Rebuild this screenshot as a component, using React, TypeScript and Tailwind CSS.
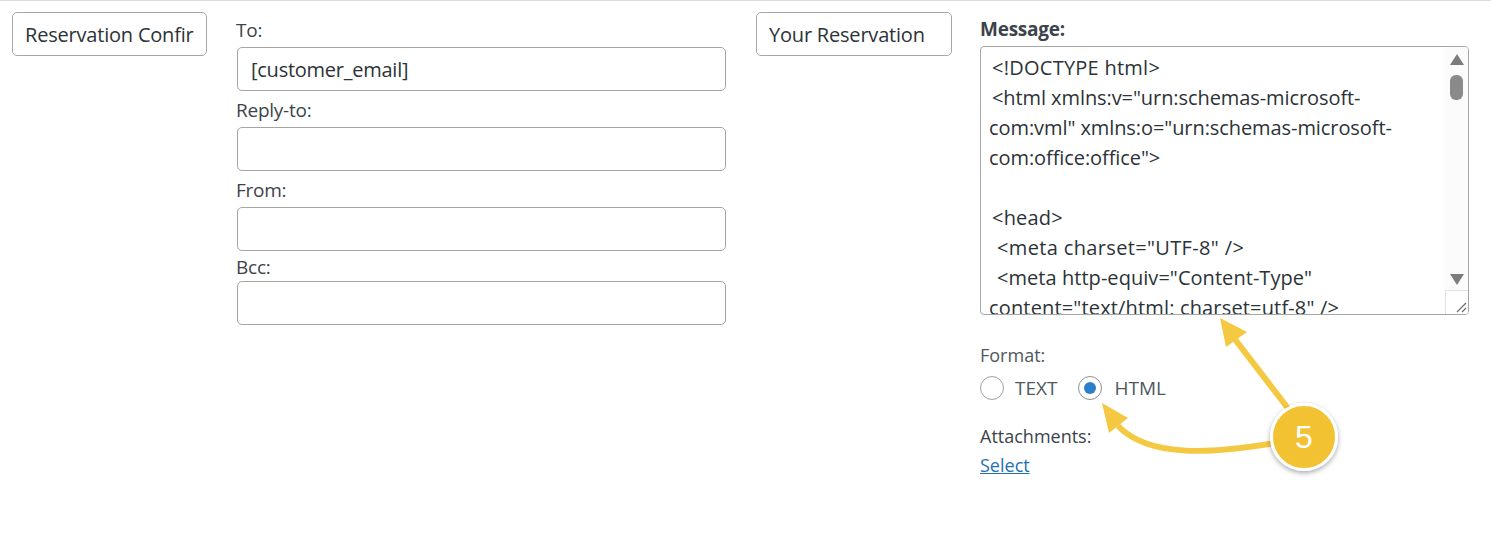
const font = "font-['Open_Sans','Noto_Sans',sans-serif]";

function Field({ label, value, className, labelClass }: { label: string; value?: string; className?: string; labelClass?: string }) {
  return (
    <div className={className}>
      <div className={`${labelClass ?? "mb-[4px]"} text-[19px] leading-[26px] text-[#3c434a] tracking-[-0.25px] ml-[-1px]`}>{label}</div>
      <div className="h-[44px] w-[489px] rounded-[5px] border border-[#a6a6a6] bg-white px-[13px] text-[20px] leading-[43px] text-[#2c3338] tracking-[-0.25px]">
        {value}
      </div>
    </div>
  );
}

function NameBox({ text, width }: { text: string; width: string }) {
  return (
    <div className={`${width} h-[44px] shrink-0 overflow-hidden whitespace-nowrap rounded-[5px] border border-[#a6a6a6] px-[12px] text-[20px] leading-[44px] text-[#2c3338] tracking-[-0.2px]`}>
      {text}
    </div>
  );
}

function Annotation() {
  return (
    <svg className="absolute left-0 top-0 pointer-events-none" width="1491" height="552" viewBox="0 0 1491 552">
      <defs>
        <filter id="badgeShadow" x="-30%" y="-30%" width="160%" height="160%">
          <feDropShadow dx="0" dy="2" stdDeviation="2.5" floodColor="#000" floodOpacity="0.35" />
        </filter>
      </defs>
      <path d="M1290 410 L1234 337" stroke="#f5c842" strokeWidth="6" fill="none" />
      <polygon points="1220,317 1247,331 1226,346" fill="#f5c842" />
      <path d="M1275 442 C1215 452 1150 458 1118 425" stroke="#f5c842" strokeWidth="6" fill="none" />
      <polygon points="1102,402 1128,417 1109,432" fill="#f5c842" />
      <circle cx="1304" cy="436" r="32.5" fill="#f2c232" stroke="#fff" strokeWidth="3" filter="url(#badgeShadow)" />
      <text x="1304" y="447" textAnchor="middle" fontSize="32" fill="#fff" fontFamily="Liberation Sans, Arial, sans-serif">5</text>
    </svg>
  );
}

const lines = [
  { t: '<!DOCTYPE html>', cls: 'pl-[3px] tracking-[0.25px]' },
  { t: '<html xmlns:v="urn:schemas-microsoft-', cls: 'pl-[3px] tracking-[-0.08px]' },
  { t: 'com:vml" xmlns:o="urn:schemas-microsoft-', cls: 'tracking-[-0.08px]' },
  { t: 'com:office:office">', cls: 'tracking-[-0.08px]' },
  { t: '\u00a0', cls: '' },
  { t: '<head>', cls: 'pl-[3px] tracking-[0.2px]' },
  { t: '<meta charset="UTF-8" />', cls: 'pl-[8px] tracking-[0.35px]' },
  { t: '<meta http-equiv="Content-Type"', cls: 'pl-[8px] tracking-[0.05px]' },
  { t: 'content="text/html; charset=utf-8" />', cls: 'tracking-[0.16px]' },
];

export default function App() {
  return (
    <div className={`relative h-[552px] w-[1491px] overflow-hidden border-t border-[#dcdcde] bg-white ${font}`}>
      <div className="flex items-start pl-[12px] pt-[11px]">
        <NameBox text="Reservation Confir" width="w-[195px]" />
        <div className="ml-[30px] w-[519px] shrink-0 mt-[5px]">
          <Field label="To:" value="[customer_email]" />
          <Field label="Reply-to:" className="mt-[6px]" />
          <Field label="From:" className="mt-[6px]" />
          <Field label="Bcc:" className="mt-[3px]" labelClass="mb-[1px]" />
        </div>
        <NameBox text="Your Reservation" width="w-[196px]" />
        <div className="ml-[29px] w-[489px] shrink-0 mt-[4px]">
          <div className="ml-[-1px] text-[19px] leading-[26px] font-bold text-[#3c434a] tracking-[-0.25px]">Message:</div>
          <div className="relative ml-[-1px] mt-[4px] h-[269px] w-[489px] overflow-hidden rounded-[4px] border border-[#a6a6a6] bg-white pl-[8px] pt-[6px]">
            {lines.map((l, i) => (
              <div key={i} className={`${l.cls} whitespace-pre text-[20px] leading-[30px] text-[#2c3338]`}>
                {l.t}
              </div>
            ))}
            <div className="absolute right-0 top-0 flex h-full w-[23px] flex-col items-center bg-[#fbfbfb]">
              <svg className="mt-[7px]" width="14" height="11" viewBox="0 0 14 11"><path d="M7 0 L14 11 H0 Z" fill="#7c7c7c" /></svg>
              <div className="mt-[10px] h-[25px] w-[13px] rounded-[6px] bg-[#8a8a8a]" />
              <svg className="mt-[174px]" width="14" height="11" viewBox="0 0 14 11"><path d="M0 0 H14 L7 11 Z" fill="#7c7c7c" /></svg>
              <div className="mt-[5px] flex h-[24px] w-[23px] items-end justify-end border-l border-t border-[#e2e2e2] bg-white">
                <svg width="14" height="14" viewBox="0 0 14 14"><path d="M3 12 L12 3 M8 12 L12 8" stroke="#6e6e6e" strokeWidth="1.2" /></svg>
              </div>
            </div>
          </div>
          <div className="ml-[-1px] mt-[28px] text-[18px] leading-[24px] text-[#50575e]">Format:</div>
          <div className="ml-[-1px] mt-[9px] flex items-center text-[19px] leading-[24px] text-[#50575e]">
            <span className="h-[24px] w-[24px] rounded-full border border-[#a0a3a8] bg-white" />
            <span className="ml-[11px]">TEXT</span>
            <span className="ml-[21px] flex h-[24px] w-[24px] items-center justify-center rounded-full border border-[#8c8f94] bg-white">
              <span className="h-[12px] w-[12px] rounded-full bg-[#2e7fc9]" />
            </span>
            <span className="ml-[12px]">HTML</span>
          </div>
          <div className="ml-[-1px] mt-[24px] text-[18px] leading-[24px] text-[#3c434a]">Attachments:</div>
          <a className="ml-[-1px] mt-[5px] block text-[18px] leading-[24px] text-[#2271b1] underline">Select</a>
        </div>
      </div>
      <Annotation />
    </div>
  );
}
